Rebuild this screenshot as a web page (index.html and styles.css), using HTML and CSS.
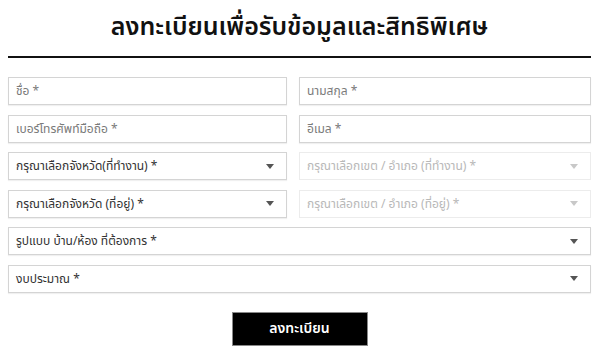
FILE: index.html
```html
<!DOCTYPE html>
<html lang="th">
<head>
  <meta charset="UTF-8">
  <meta name="viewport" content="width=device-width, initial-scale=1.0">
  <title>ลงทะเบียน</title>
  <link rel="stylesheet" href="styles.css">
</head>
<body>
  <div class="register">
    <h1 class="register-title">ลงทะเบียนเพื่อรับข้อมูลและสิทธิพิเศษ</h1>
    <form class="register-form">
      <div class="field"><span class="placeholder">ชื่อ *</span></div>
      <div class="field"><span class="placeholder">นามสกุล *</span></div>
      <div class="field"><span class="placeholder">เบอร์โทรศัพท์มือถือ *</span></div>
      <div class="field"><span class="placeholder">อีเมล *</span></div>
      <div class="field select"><span class="value">กรุณาเลือกจังหวัด(ที่ทำงาน) *</span><span class="arrow"></span></div>
      <div class="field select disabled"><span class="value">กรุณาเลือกเขต / อำเภอ (ที่ทำงาน) *</span><span class="arrow"></span></div>
      <div class="field select"><span class="value">กรุณาเลือกจังหวัด (ที่อยู่) *</span><span class="arrow"></span></div>
      <div class="field select disabled"><span class="value">กรุณาเลือกเขต / อำเภอ (ที่อยู่) *</span><span class="arrow"></span></div>
      <div class="field select wide"><span class="value">รูปแบบ บ้าน/ห้อง ที่ต้องการ *</span><span class="arrow"></span></div>
      <div class="field select wide"><span class="value">งบประมาณ *</span><span class="arrow"></span></div>
    </form>
    <div class="actions">
      <button type="button" class="submit">ลงทะเบียน</button>
    </div>
  </div>
</body>
</html>
```

FILE: styles.css
```css
body {
  margin: 0;
  background-color: #fff;
  font-family: "Noto Sans Thai", "Noto Sans", "DejaVu Sans", sans-serif;
}
.register {
  padding: 0 9px 0 8px;
}
.register-title {
  margin: 0;
  padding-top: 9px;
  height: 58px;
  box-sizing: border-box;
  border-bottom: 2px solid #111;
  text-align: center;
  font-size: 25px;
  font-weight: 600;
  line-height: 36px;
  color: #111;
}
.register-form {
  display: grid;
  grid-template-columns: 279px 1fr;
  column-gap: 12px;
  row-gap: 9.6px;
  margin-top: 19px;
}
.field {
  height: 28px;
  box-sizing: border-box;
  border: 1px solid #d4d4d4;
  box-shadow: 0 1px 1px rgba(0, 0, 0, 0.06);
  display: flex;
  align-items: center;
  padding: 0 12px 0 7px;
  font-size: 12px;
  color: #333;
}
.field.wide {
  grid-column: 1 / -1;
}
.placeholder {
  color: #7a7a7a;
}
.select .value {
  flex: 1;
}
.arrow {
  width: 0;
  height: 0;
  border-left: 4px solid transparent;
  border-right: 4px solid transparent;
  border-top: 5px solid #555;
}
.disabled {
  border-color: #ececec;
  box-shadow: none;
  color: #b8b8b8;
}
.disabled .arrow {
  border-top-color: #c8c8c8;
}
.actions {
  display: flex;
  justify-content: center;
  margin-top: 19px;
}
.submit {
  width: 136px;
  height: 34px;
  border: 1px solid #888;
  background-color: #000;
  color: #fff;
  font-family: inherit;
  font-size: 14px;
  font-weight: 600;
}
```
